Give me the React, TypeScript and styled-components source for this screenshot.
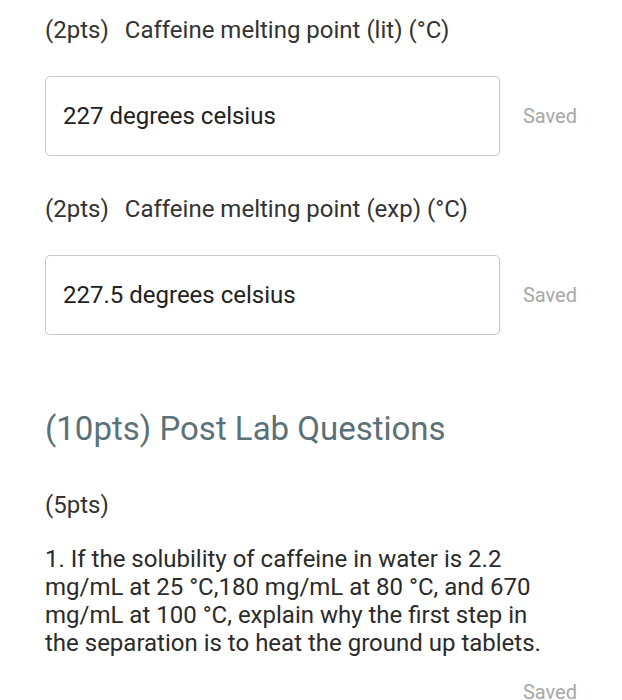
import React from "react";
import styled, { createGlobalStyle } from "styled-components";

const GlobalStyle = createGlobalStyle`
  body {
    margin: 0;
    background: #ffffff;
    font-family: Roboto, "Liberation Sans", sans-serif;
    color: #2b2b2b;
  }
`;

const Page = styled.div`
  padding: 15px 45px 0 45px;
  width: 532px;
`;

const Label = styled.div`
  font-size: 24px;
  line-height: 30px;
  color: #333333;
  display: flex;
  gap: 16px;
`;

const AnswerRow = styled.div`
  display: flex;
  align-items: center;
  gap: 23px;
  margin: 31px 0 38px;
`;

const AnswerBox = styled.div`
  width: 456px;
  height: 80px;
  box-sizing: border-box;
  border: 1px solid #c8c8c8;
  border-radius: 5px;
  display: flex;
  align-items: center;
  padding: 0 17px;
  font-size: 24px;
  color: #222222;
`;

const SavedText = styled.span<{ $align?: "right" }>`
  font-size: 20px;
  line-height: 23px;
  color: #a8a8a8;
  display: block;
  text-align: ${({ $align }) => $align || "left"};
`;

const SectionHeading = styled.h2`
  margin: 74px 0 0;
  font-weight: 400;
  font-size: 33px;
  line-height: 40px;
  color: #5b7177;
`;

const Points = styled.div`
  margin-top: 41px;
  font-size: 24px;
  line-height: 30px;
  color: #333333;
`;

const Question = styled.p`
  margin: 25px 0 0;
  font-size: 24px;
  line-height: 28px;
  color: #2b2b2b;
  width: 500px;
`;

const FooterSaved = styled.div`
  width: 532px;
  margin-top: 24px;
`;

interface FieldProps {
  pts: string;
  label: string;
  value: string;
}

const Field = ({ pts, label, value }: FieldProps) => (
  <>
    <Label>
      <span>{pts}</span>
      <span>{label}</span>
    </Label>
    <AnswerRow>
      <AnswerBox>{value}</AnswerBox>
      <SavedText>Saved</SavedText>
    </AnswerRow>
  </>
);

function App() {
  return (
    <>
      <GlobalStyle />
      <Page>
        <Field pts="(2pts)" label="Caffeine melting point (lit) (°C)" value="227 degrees celsius" />
        <Field pts="(2pts)" label="Caffeine melting point (exp) (°C)" value="227.5 degrees celsius" />
        <SectionHeading>(10pts) Post Lab Questions</SectionHeading>
        <Points>(5pts)</Points>
        <Question>
          1. If the solubility of caffeine in water is 2.2 mg/mL at 25 °C,180 mg/mL at 80 °C, and 670
          mg/mL at 100 °C, explain why the first step in the separation is to heat the ground up
          tablets.
        </Question>
        <FooterSaved>
          <SavedText $align="right">Saved</SavedText>
        </FooterSaved>
      </Page>
    </>
  );
}

export default App;
